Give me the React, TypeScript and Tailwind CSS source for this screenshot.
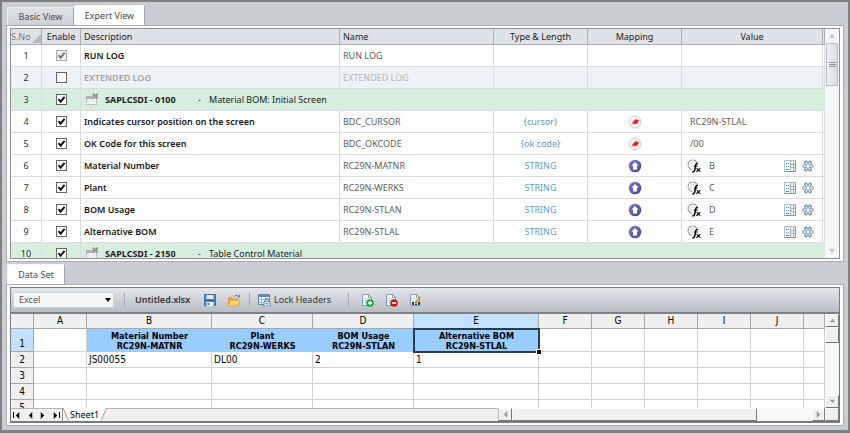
import React, { useState } from 'react';
import clsx from 'clsx';

type RowKind = 'log' | 'disabled' | 'screen' | 'pin' | 'column';

interface MappingRow {
  id: number;
  kind: RowKind;
  checked: boolean;
  description: string;
  name?: string;
  type?: string;
  value?: string;
}

const rows: MappingRow[] = [
  { id: 1, kind: 'log', checked: true, description: 'RUN LOG', name: 'RUN LOG' },
  { id: 2, kind: 'disabled', checked: false, description: 'EXTENDED LOG', name: 'EXTENDED LOG' },
  { id: 3, kind: 'screen', checked: true, description: 'SAPLCSDI - 0100', name: 'Material BOM: Initial Screen' },
  { id: 4, kind: 'pin', checked: true, description: 'Indicates cursor position on the screen', name: 'BDC_CURSOR', type: '{cursor}', value: 'RC29N-STLAL' },
  { id: 5, kind: 'pin', checked: true, description: 'OK Code for this screen', name: 'BDC_OKCODE', type: '{ok code}', value: '/00' },
  { id: 6, kind: 'column', checked: true, description: 'Material Number', name: 'RC29N-MATNR', type: 'STRING', value: 'B' },
  { id: 7, kind: 'column', checked: true, description: 'Plant', name: 'RC29N-WERKS', type: 'STRING', value: 'C' },
  { id: 8, kind: 'column', checked: true, description: 'BOM Usage', name: 'RC29N-STLAN', type: 'STRING', value: 'D' },
  { id: 9, kind: 'column', checked: true, description: 'Alternative BOM', name: 'RC29N-STLAL', type: 'STRING', value: 'E' },
  { id: 10, kind: 'screen', checked: true, description: 'SAPLCSDI - 2150', name: 'Table Control Material' },
];

const sheetColumns = ['A', 'B', 'C', 'D', 'E', 'F', 'G', 'H', 'I', 'J', ''];

const sheetHeaders: Record<string, [string, string]> = {
  B: ['Material Number', 'RC29N-MATNR'],
  C: ['Plant', 'RC29N-WERKS'],
  D: ['BOM Usage', 'RC29N-STLAN'],
  E: ['Alternative BOM', 'RC29N-STLAL'],
};

const sheetValues: Record<string, string> = { B: 'JS00055', C: 'DL00', D: '2', E: '1' };

/* ---------- icons ---------- */

const PinIcon = () => (
  <svg width="14" height="14" viewBox="0 0 14 14">
    <circle cx="7" cy="7" r="6" fill="#f4f4f4" stroke="#cdcdcd" />
    <path d="M7.4 3.4 8.8 5l2-.4-.2 1.800-1.200.600.200 2.200L7.800 8.600 6.600 9.800 6 8.400 4 7.600 5.800 6.600 5.600 5.400l1.600-.2z" fill="#ee1a1a" />
    <path d="M5.600 8 3.600 9.600" stroke="#777" strokeWidth="1" />
  </svg>
);

const UpIcon = () => (
  <svg width="14" height="14" viewBox="0 0 14 14">
    <defs>
      <linearGradient id="orb" x1="0" y1="0" x2="1" y2="1">
        <stop offset="0" stopColor="#8e8edc" />
        <stop offset="1" stopColor="#36368c" />
      </linearGradient>
    </defs>
    <circle cx="7" cy="7" r="6.3" fill="url(#orb)" />
    <circle cx="7" cy="7" r="4.6" fill="#6060bc" />
    <path d="M7 3 10.6 6.600H9V10.500H5V6.600H3.4z" fill="#fff" />
  </svg>
);

const FunctionIcon = () => (
  <svg width="14" height="14" viewBox="0 0 14 14" fill="none">
    <path
      d="M5.500 9.800 4.200 10.600 3.400 9.200 1.800 9 2 7.400.6 6.400 1.600 5 .9 3.600 2.500 3 2.800 1.400 4.400 1.700 5.600.6 6.800 1.600 8.400 1.200 8.900 2.600 10.400 3 10.200 4.200"
      stroke="#8a8a8a"
      strokeWidth=".9"
    />
    <path d="M4.800 7.600A2.200 2.200 0 1 1 7.800 4.400" stroke="#a8a8a8" strokeWidth=".8" strokeDasharray="1.500 .8" />
    <path d="M10.800 4.800C9.400 3.900 8.900 5 8.500 7L7.800 10.600C7.500 12.200 6.700 13.300 5.400 12.500" stroke="#0c0c0c" strokeWidth="1.600" />
    <path d="M6.600 7h4" stroke="#0c0c0c" />
    <path d="M9.500 9.300c1.800-.5 1.300 3.600 3.900 3M13.200 9.300 9.400 12.700" stroke="#0c0c0c" strokeWidth="1.200" />
  </svg>
);

const GridIcon = () => (
  <svg width="12" height="12" viewBox="0 0 12 12" fill="none">
    <path d="M.5.5h11v11H.5z" fill="#f6f9fb" stroke="#b4bcc4" />
    <path d="M11.500.5v11H.5" stroke="#8b959f" />
    <path d="M6.500 1v10M9.500 1v10M7 4.500h4M7 7.500h4" stroke="#a9b3bd" />
    <path d="M2 3.500h1M4 3.500h1M2 6.500h1M4 6.500h1M2 9.500h3" stroke="#4e8cbd" />
  </svg>
);

/* six open petals around a hollow centre */
const FlowerIcon = () => (
  <svg width="12" height="12" viewBox="0 0 12 12" fill="none" stroke="#6690b0" strokeWidth=".9">
    {[30, 90, 150, 210, 270, 330].map((a) => (
      <path key={a} d="M5.100 4.600 4.700 1.600Q4.800.5 5.500.6L6 1.500 6.500.6Q7.200.5 7.300 1.600L6.900 4.600" transform={`rotate(${a} 6 6)`} />
    ))}
  </svg>
);

const ScreenIcon = () => (
  <svg width="14" height="13" viewBox="0 0 14 13" fill="none">
    <path d="M1.500 5.500h10v6h-10z" fill="#f1f1f1" stroke="#a0a0a0" strokeDasharray="1.500 1" />
    <path d="M1 3h6.500v3H1z" fill="#b2b2b2" />
    <path d="M2 6h9v4.500H2z" fill="#efefef" />
    <path d="M7.500.5h2v1h1.500v-1h2v2h-1v1h1v2h-2v-1H9.500v1h-2v-2h1v-1h-1z" fill="#8f8f8f" />
  </svg>
);

const SaveIcon = () => (
  <svg width="12" height="12" viewBox="0 0 12 12">
    <path d="M.5.5h11v11H.5z" fill="#4f88c0" stroke="#3d72aa" />
    <path d="M2.500 1h7v4h-7z" fill="#dceaf7" />
    <path d="M2 6h8v1H2z" fill="#2f5f92" />
    <path d="M2.500 8h7v4h-7z" fill="#eef4fa" />
    <path d="M3.500 9h2v2h-2z" fill="#3d72aa" />
  </svg>
);

const OpenIcon = () => (
  <svg width="14" height="13" viewBox="0 0 14 13">
    <path d="M1 3h4l1 1.500h5V12H1z" fill="#e0a63b" />
    <path d="M3 6h10l-2 6H1z" fill="#fbd176" stroke="#d8962c" strokeWidth=".7" />
    <path d="M7 3c1-2 3-2.400 4.600-.8M12.600.6v2.400h-2.400" fill="none" stroke="#5b7f9f" />
  </svg>
);

const LockHeadersIcon = () => (
  <svg width="13" height="13" viewBox="0 0 13 13" fill="none">
    <path d="M.5.5h11v10H.5z" fill="#f4f9fe" stroke="#5c88b8" />
    <path d="M1 1h10v2H1z" fill="#5d91c9" />
    <path d="M1 5.500h10M1 8.500h5M3.500 3v7M7.500 3v3" stroke="#93b6da" />
    <path d="M7 8V6.800a2 2 0 0 1 4 0V8" stroke="#476a91" />
    <path d="M6 7.500h6V13H6z" fill="#e3eefa" stroke="#4f7fb0" strokeWidth=".8" />
    <path d="M7.500 9.500h3M7.500 11.300h3" stroke="#5c88b8" strokeWidth=".8" />
  </svg>
);

const SheetPageIcon: React.FC<{ mode: 'add' | 'remove' | 'edit' }> = ({ mode }) => (
  <svg width="13" height="13" viewBox="0 0 13 13" fill="none">
    <path d="M1.500.5h6l3 3v8h-9z" fill="#f5f9fd" stroke="#7e9fc0" />
    <path d="M7.500.5v3h3" stroke="#7e9fc0" />
    <path d="M2 4.500h5M2 6.500h6M2 8.500h6M4.500 3v7" stroke="#c2d4e6" strokeWidth=".7" />
    {mode === 'add' && (
      <>
        <circle cx="9" cy="9" r="3.800" fill="#17a12b" />
        <path d="M6.800 9h4.400M9 6.800v4.400" stroke="#fff" strokeWidth="1.400" />
      </>
    )}
    {mode === 'remove' && (
      <>
        <circle cx="9" cy="9" r="3.800" fill="#c3160f" />
        <path d="M6.800 9h4.400" stroke="#fff" strokeWidth="1.600" />
      </>
    )}
    {mode === 'edit' && (
      <>
        <path d="M3 8h2v3H3zM6 9.500h2V11H6zM9 8h2v3H9z" fill="#27323d" />
        <path d="m7 8 4.500-5" stroke="#e39a31" strokeWidth="2" />
        <path d="m6.500 9 .8-1.400" stroke="#333" />
      </>
    )}
  </svg>
);

const Arrow: React.FC<{ dir: 'up' | 'down' | 'left' | 'right'; className?: string }> = ({ dir, className }) => {
  const d = {
    up: 'M4 2 7 6H1z',
    down: 'M1 2h6L4 6z',
    left: 'M6 0v8L2 4z',
    right: 'M2 0v8l4-4z',
  }[dir];
  return (
    <svg width="8" height="8" viewBox="0 0 8 8" className={clsx('fill-current', className)}>
      <path d={d} />
    </svg>
  );
};

/* ---------- pieces ---------- */

const Tab: React.FC<{ label: string; active: boolean; onClick?: () => void; className?: string }> = ({ label, active, onClick, className }) => (
  <button
    role="tab"
    aria-selected={active}
    onClick={onClick}
    className={clsx(
      'rounded-t-[2px] border border-b-0 text-center text-[#454a52]',
      active ? 'h-5 border-[#f4f5f6] border-r-[#a3a8ae] bg-white' : 'h-[18px] border-[#eceef0] border-r-[#a3a8ae] bg-gradient-to-b from-[#dfe2e6] to-[#cdd1d7]',
      className
    )}
  >
    {label}
  </button>
);

const EnableBox: React.FC<{ row: MappingRow }> = ({ row }) => (
  <label className="mx-auto grid size-[11px]">
    <input
      type="checkbox"
      aria-label={`Enable ${row.description}`}
      defaultChecked={row.checked}
      disabled={row.kind === 'log'}
      className="peer size-[11px] appearance-none border border-[#666] bg-white [grid-area:1/1] disabled:border-[#aaa] disabled:bg-[#eee]"
    />
    <svg
      viewBox="0 0 11 11"
      className="pointer-events-none invisible size-[11px] fill-none stroke-[#111] stroke-2 [grid-area:1/1] peer-checked:visible peer-disabled:stroke-[#777]"
    >
      <path d="M2.500 5.200 4.600 7.600 8.600 2.800" />
    </svg>
  </label>
);

const MappingTableRow: React.FC<{ row: MappingRow }> = ({ row }) => {
  const cell = clsx(
    'h-[22px] border-b border-[#d9dce0] p-0',
    row.kind === 'screen' ? 'bg-[#d7eedf]' : 'border-r',
    row.kind === 'disabled' && 'bg-[#eef1f5]'
  );
  const faded = row.kind === 'disabled';

  return (
    <tr>
      <td className={clsx(cell, 'border-r text-center text-[#333]')}>{row.id}</td>
      <td className={clsx(cell, 'border-r')}>
        <EnableBox row={row} />
      </td>
      {row.kind === 'screen' ? (
        <td colSpan={6} className={cell}>
          <div className="flex items-center pl-1 text-[#222]">
            <ScreenIcon />
            <span className="ml-[6px] w-[93px] font-bold">{row.description}</span>
            <span className="w-[11px]">-</span>
            <span>{row.name}</span>
          </div>
        </td>
      ) : (
        <>
          <td className={clsx(cell, 'pl-[3px] font-semibold', faded ? 'text-[#a3a6aa]' : 'text-[#161616]')}>{row.description}</td>
          <td className={clsx(cell, 'pl-[3px]', faded ? 'text-[#b5b8bc]' : 'text-[#5c5c5c]')}>{row.name}</td>
          <td className={clsx(cell, 'text-center text-[#5b9bd5]')}>{row.type}</td>
          <td className={cell}>
            <div className="flex justify-center">
              {row.kind === 'pin' && <PinIcon />}
              {row.kind === 'column' && <UpIcon />}
            </div>
          </td>
          <td className={clsx(cell, 'text-[#5c5c5c]')}>
            {row.kind === 'column' ? (
              <div className="flex items-center pr-2 pl-[5px]">
                <button aria-label="Edit formula">
                  <FunctionIcon />
                </button>
                <span className="ml-2 flex-1">{row.value}</span>
                <button aria-label="Choose column" className="mr-[6px]">
                  <GridIcon />
                </button>
                <button aria-label="Options">
                  <FlowerIcon />
                </button>
              </div>
            ) : (
              <span className="pl-2">{row.value}</span>
            )}
          </td>
          <td className={cell}></td>
        </>
      )}
    </tr>
  );
};

const headCell = 'h-4 border-r border-b border-[#a9adb3] bg-[#dfe2e7] p-0 font-normal text-[#222]';

const MappingTable = () => (
  <table className="w-full table-fixed border-separate border-spacing-0">
    <colgroup>
      <col className="w-[31px]" />
      <col className="w-[39px]" />
      <col />
      <col className="w-[154px]" />
      <col className="w-[94px]" />
      <col className="w-[94px]" />
      <col className="w-[141px]" />
      <col className="w-[2px]" />
    </colgroup>
    <thead>
      <tr>
        <th className={headCell}>
          <div className="flex items-end justify-between text-[#777]">
            S.No
            <svg width="9" height="9" viewBox="0 0 9 9" className="fill-[#b4b8bd]">
              <path d="M9 0v9H0z" />
            </svg>
          </div>
        </th>
        <th className={headCell}>Enable</th>
        <th className={clsx(headCell, 'pl-[3px] text-left')}>Description</th>
        <th className={clsx(headCell, 'pl-[3px] text-left')}>Name</th>
        <th className={headCell}>Type &amp; Length</th>
        <th className={headCell}>Mapping</th>
        <th className={headCell}>Value</th>
        <th className={headCell}></th>
      </tr>
    </thead>
    <tbody>
      {rows.map((row) => (
        <MappingTableRow key={row.id} row={row} />
      ))}
    </tbody>
  </table>
);

const bevel = 'flex shrink-0 items-center justify-center border border-[#fff] border-r-[#777] border-b-[#777] bg-[#f0f0f0] text-[#999]';

const Sheet = () => {
  const grid = 'border-r border-b border-[#d0d0d0] p-0';
  const rowHead = 'border-r border-b border-[#a8a8a8] p-0 text-center font-normal text-[10px]';

  return (
    <table className="w-full table-fixed border-separate border-spacing-0 bg-white font-['DejaVu_Sans_Condensed','DejaVu_Sans',sans-serif] text-black">
      <colgroup>
        <col className="w-[23px]" />
        <col className="w-[53px]" />
        <col className="w-[125px]" />
        <col className="w-[101px]" />
        <col className="w-[101px]" />
        <col className="w-[125px]" />
        <col className="w-[53px]" />
        <col className="w-[53px]" />
        <col className="w-[53px]" />
        <col className="w-[53px]" />
        <col className="w-[53px]" />
        <col />
      </colgroup>
      <thead>
        <tr>
          <th className={clsx(rowHead, 'h-[15px] bg-[#f0f0f0]')}></th>
          {sheetColumns.map((c) => (
            <th key={c} className={clsx(rowHead, 'h-[15px] leading-[14px]', c === 'E' ? 'bg-[#c4e1ff]' : 'bg-[#f0f0f0]')}>
              {c}
            </th>
          ))}
        </tr>
      </thead>
      <tbody>
        <tr>
          <th className={clsx(rowHead, 'h-[23px] bg-[#c4e1ff] align-bottom leading-[14px]')}>1</th>
          {sheetColumns.map((c) => {
            const head = sheetHeaders[c];
            if (!head) return <td key={c} className={grid}></td>;
            return (
              <td
                key={c}
                className={clsx('relative h-[23px] bg-[#99ccff] p-0 text-center text-[9px] leading-[10px] font-bold', c === 'E' && 'outline-2 -outline-offset-1 outline-[#2b3c50]')}
              >
                {head[0]}
                <br />
                {head[1]}
                {c === 'E' && <span className="absolute -right-[2px] -bottom-[2px] size-1 bg-[#111] outline outline-white"></span>}
              </td>
            );
          })}
        </tr>
        {[2, 3, 4, 5].map((n) => (
          <tr key={n}>
            <th className={clsx(rowHead, 'h-[16px] bg-[#f0f0f0] leading-[14px]')}>{n}</th>
            {sheetColumns.map((c) => (
              <td key={c} className={clsx(grid, 'pl-[2px] text-[10px] leading-[14px]')}>
                {n === 2 ? sheetValues[c] : ''}
              </td>
            ))}
          </tr>
        ))}
      </tbody>
    </table>
  );
};

const Separator = () => <span className="h-[14px] border-l border-[#a4a9af]"></span>;

const Toolbar = () => (
  <div className="flex h-[26px] items-center border-b-2 border-[#7d8187] bg-gradient-to-b from-[#e3e6ea] to-[#b9bec4] pl-[2px] text-[#333]">
    <div className="relative">
      <select
        aria-label="Source"
        className="block h-4 w-[101px] appearance-none rounded-[2px] border border-[#d0d3d7] bg-[#f5f6f7] pl-[5px] text-[#555]"
      >
        <option>Excel</option>
      </select>
      <Arrow dir="down" className="pointer-events-none absolute top-1 right-[2px] text-black" />
    </div>
    <span className="ml-[10px] flex">
      <Separator />
    </span>
    <span className="ml-[10px] w-[69px] font-semibold">Untitled.xlsx</span>
    <button aria-label="Save">
      <SaveIcon />
    </button>
    <button aria-label="Open" className="ml-[11px]">
      <OpenIcon />
    </button>
    <span className="ml-2 flex">
      <Separator />
    </span>
    <button className="ml-[8px] flex w-[90px] items-center gap-[3px] whitespace-nowrap">
      <LockHeadersIcon />
      Lock Headers
    </button>
    <Separator />
    <div className="ml-[12px] flex gap-[11px]">
      <button aria-label="Add row">
        <SheetPageIcon mode="add" />
      </button>
      <button aria-label="Remove row">
        <SheetPageIcon mode="remove" />
      </button>
      <button aria-label="Edit sheet">
        <SheetPageIcon mode="edit" />
      </button>
    </div>
  </div>
);

const SheetTabs = () => (
  <div className="flex h-[13px] bg-[#f0f0f0] text-black">
    <div className="flex w-[51px] items-center justify-between border-t border-[#b5b5b5] pr-[2px] pl-[2px]">
      <button aria-label="First sheet" className="flex items-center">
        <span className="h-[6px] w-px bg-black"></span>
        <Arrow dir="left" className="size-[7px]" />
      </button>
      <button aria-label="Previous sheet">
        <Arrow dir="left" className="size-[7px]" />
      </button>
      <button aria-label="Next sheet">
        <Arrow dir="right" className="size-[7px]" />
      </button>
      <button aria-label="Last sheet" className="flex items-center">
        <Arrow dir="right" className="size-[7px]" />
        <span className="h-[6px] w-px bg-black"></span>
      </button>
    </div>
    <button className="flex items-center bg-white leading-3">
      <svg width="7" height="13" viewBox="0 0 7 13">
        <path d="M0 0v13h6z" fill="#f0f0f0" />
        <path d="M.5 0v13M1 0l5.500 12.500" stroke="#999" fill="none" />
      </svg>
      <span className="px-px text-[9px]">Sheet1</span>
      <svg width="7" height="13" viewBox="0 0 7 13">
        <path d="M7 0v13H1z" fill="#f0f0f0" />
        <path d="M6.500 0 1 12.500" stroke="#999" fill="none" />
      </svg>
    </button>
    <div className="flex-1 border-t border-[#b5b5b5]"></div>
    <div className="flex w-[327px]">
      <button aria-label="Scroll left" className={clsx(bevel, 'w-[14px] border-l-[#bbb]')}>
        <Arrow dir="left" className="size-[7px]" />
      </button>
      <div className={clsx(bevel, 'w-[245px]')}></div>
      <div className="flex-1 bg-[#f8f8f8]"></div>
      <button aria-label="Scroll right" className={clsx(bevel, 'w-[13px]')}>
        <Arrow dir="right" className="size-[7px]" />
      </button>
    </div>
  </div>
);

const panel = 'border border-[#a9adb3] bg-white px-[3px] py-[2px]';

export default function App() {
  const [view, setView] = useState<'basic' | 'expert'>('expert');

  return (
    <div className="flex h-screen flex-col border-2 border-b-[3px] border-[#808080] bg-[#cacdd2] px-1 pt-[3px] pb-1 font-['Noto_Sans','Open_Sans',sans-serif] text-[9px] leading-3">
      <div role="tablist" className="flex items-end pl-px">
        <Tab label="Basic View" active={view === 'basic'} onClick={() => setView('basic')} className="w-[67px]" />
        <Tab label="Expert View" active={view === 'expert'} onClick={() => setView('expert')} className="w-[71px]" />
      </div>
      <div className={clsx(panel, 'flex min-h-0 flex-1 flex-col')}>
        <div className="flex min-h-0 flex-1 border border-[#8d9197]">
          <div className="min-w-0 flex-1 overflow-hidden">
            <MappingTable />
          </div>
          <div className="flex w-[14px] flex-col items-center bg-[#f5f6f7] px-px text-[#c2c4c7]">
            <button aria-label="Scroll up" className="flex h-[14px] items-center">
              <Arrow dir="up" />
            </button>
            <div className="flex h-[43px] w-full flex-col items-center justify-center gap-px rounded-[1px] border border-[#b9bdc2] bg-gradient-to-r from-[#eef0f2] to-[#d9dce0]">
              <span className="h-px w-[7px] bg-[#8d9197]"></span>
              <span className="h-px w-[7px] bg-[#8d9197]"></span>
              <span className="h-px w-[7px] bg-[#8d9197]"></span>
            </div>
            <button aria-label="Scroll down" className="mt-auto flex h-[14px] items-center">
              <Arrow dir="down" />
            </button>
          </div>
        </div>
      </div>

      <div role="tablist" className="mt-[2px] flex pl-px">
        <Tab label="Data Set" active className="w-[58px]" />
      </div>
      <div className={panel}>
        <div className="border border-b-2 border-[#777a7e]">
          <Toolbar />
          <div className="flex">
            <div className="min-w-0 flex-1">
              <div className="h-[94px] overflow-hidden">
                <Sheet />
              </div>
              <SheetTabs />
            </div>
            <div className="flex w-[14px] flex-col bg-[#f8f8f8]">
              <button aria-label="Scroll sheet up" className={clsx(bevel, 'h-[13px]')}>
                <Arrow dir="up" className="size-[7px]" />
              </button>
              <div className={clsx(bevel, 'h-4')}></div>
              <div className="flex-1"></div>
              <button aria-label="Scroll sheet down" className={clsx(bevel, 'h-[13px]')}>
                <Arrow dir="down" className="size-[7px]" />
              </button>
              <div className={clsx(bevel, 'h-[13px]')}></div>
            </div>
          </div>
        </div>
      </div>
    </div>
  );
}
